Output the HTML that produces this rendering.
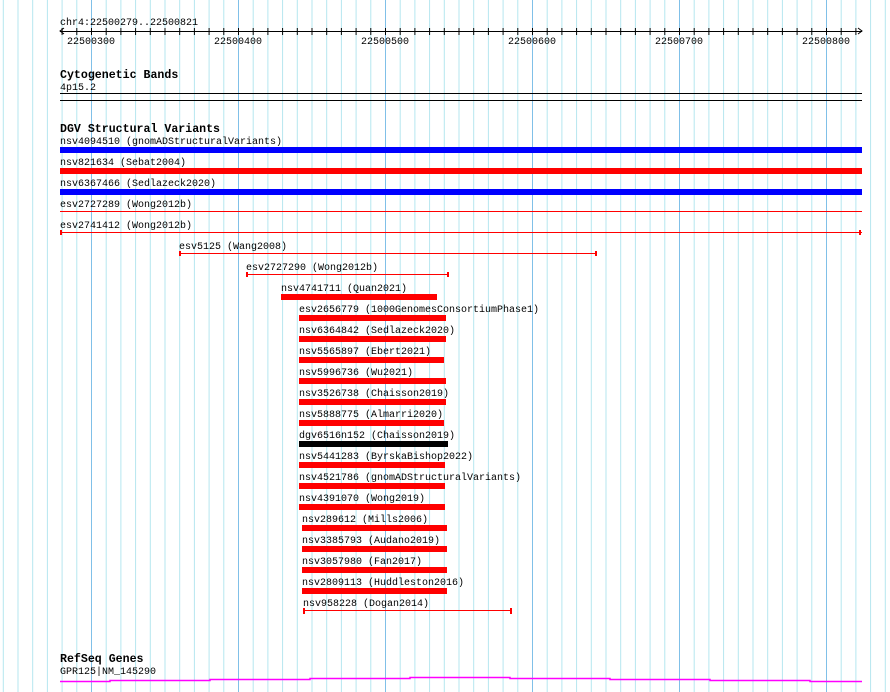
<!DOCTYPE html>
<html><head><meta charset="utf-8"><style>
html,body{margin:0;padding:0;background:#fff;}
svg{display:block}
text{font-family:"Liberation Mono","DejaVu Sans Mono",monospace;font-size:10px;fill:#000}
.h{font-weight:bold;font-size:11.6px}
rect{shape-rendering:crispEdges}
</style></head><body>
<svg width="890" height="692" viewBox="0 0 890 692" xmlns="http://www.w3.org/2000/svg">
<defs>
<pattern id="g1" patternUnits="userSpaceOnUse" x="2.8" y="0" width="14.7" height="692"><rect x="0" y="0" width="1" height="692" fill="#b4e6ef"/></pattern>
<pattern id="g2" patternUnits="userSpaceOnUse" x="91" y="0" width="147" height="692"><rect x="0" y="0" width="1" height="692" fill="#80c0e8"/></pattern>
<pattern id="t1" patternUnits="userSpaceOnUse" x="2.8" y="0" width="14.7" height="692"><rect x="0" y="28" width="1" height="7" fill="#000"/></pattern>
</defs>
<rect width="890" height="692" fill="#fff"/>
<rect x="0" width="890" height="692" fill="url(#g1)"/>
<rect x="0" width="890" height="692" fill="url(#g2)"/>
<text x="60" y="25">chr4:22500279..22500821</text>
<rect x="60" y="31" width="802" height="1" fill="#000"/>
<rect x="60" y="28" width="802" height="7" fill="url(#t1)"/>
<path d="M64 28 L60 31 L64 34" stroke="#000" fill="none"/>
<path d="M858 28 L862 31 L858 34" stroke="#000" fill="none"/>
<text x="91" y="44" text-anchor="middle">22500300</text>
<text x="238" y="44" text-anchor="middle">22500400</text>
<text x="385" y="44" text-anchor="middle">22500500</text>
<text x="532" y="44" text-anchor="middle">22500600</text>
<text x="679" y="44" text-anchor="middle">22500700</text>
<text x="826" y="44" text-anchor="middle">22500800</text>

<text class="h" x="60" y="78">Cytogenetic Bands</text>
<text x="60" y="90">4p15.2</text>
<rect x="60" y="93" width="802" height="1" fill="#000"/>
<rect x="60" y="100" width="802" height="1" fill="#000"/>

<text class="h" x="60" y="132">DGV Structural Variants</text>
<text x="60" y="144">nsv4094510 (gnomADStructuralVariants)</text>
<rect x="60" y="147" width="802" height="6" fill="#0000ff"/>
<text x="60" y="165">nsv821634 (Sebat2004)</text>
<rect x="60" y="168" width="802" height="6" fill="#ff0000"/>
<text x="60" y="186">nsv6367466 (Sedlazeck2020)</text>
<rect x="60" y="189" width="802" height="6" fill="#0000ff"/>
<text x="60" y="207">esv2727289 (Wong2012b)</text>
<rect x="60" y="211" width="802" height="1" fill="#ff0000"/>
<text x="60" y="228">esv2741412 (Wong2012b)</text>
<rect x="60" y="232" width="802" height="1" fill="#ff0000"/>
<rect x="60" y="230" width="2" height="5" fill="#ff0000"/><rect x="859" y="230" width="2" height="5" fill="#ff0000"/>
<text x="179" y="249">esv5125 (Wang2008)</text>
<rect x="180" y="253" width="416" height="1" fill="#ff0000"/>
<rect x="179" y="251" width="2" height="5" fill="#ff0000"/><rect x="595" y="251" width="2" height="5" fill="#ff0000"/>
<text x="246" y="270">esv2727290 (Wong2012b)</text>
<rect x="247" y="274" width="201" height="1" fill="#ff0000"/>
<rect x="246" y="272" width="2" height="5" fill="#ff0000"/><rect x="447" y="272" width="2" height="5" fill="#ff0000"/>
<text x="281" y="291">nsv4741711 (Quan2021)</text>
<rect x="281" y="294" width="156" height="6" fill="#ff0000"/>

<text x="299" y="312">esv2656779 (1000GenomesConsortiumPhase1)</text>
<rect x="299" y="315" width="147" height="6" fill="#ff0000"/>
<text x="299" y="333">nsv6364842 (Sedlazeck2020)</text>
<rect x="299" y="336" width="147" height="6" fill="#ff0000"/>
<text x="299" y="354">nsv5565897 (Ebert2021)</text>
<rect x="299" y="357" width="145" height="6" fill="#ff0000"/>
<text x="299" y="375">nsv5996736 (Wu2021)</text>
<rect x="299" y="378" width="147" height="6" fill="#ff0000"/>
<text x="299" y="396">nsv3526738 (Chaisson2019)</text>
<rect x="299" y="399" width="147" height="6" fill="#ff0000"/>
<text x="299" y="417">nsv5888775 (Almarri2020)</text>
<rect x="299" y="420" width="145" height="6" fill="#ff0000"/>
<text x="299" y="438">dgv6516n152 (Chaisson2019)</text>
<rect x="299" y="441" width="149" height="6" fill="#000"/>
<text x="299" y="459">nsv5441283 (ByrskaBishop2022)</text>
<rect x="299" y="462" width="146" height="6" fill="#ff0000"/>
<text x="299" y="480">nsv4521786 (gnomADStructuralVariants)</text>
<rect x="299" y="483" width="146" height="6" fill="#ff0000"/>
<text x="299" y="501">nsv4391070 (Wong2019)</text>
<rect x="299" y="504" width="146" height="6" fill="#ff0000"/>
<text x="302" y="522">nsv289612 (Mills2006)</text>
<rect x="302" y="525" width="145" height="6" fill="#ff0000"/>
<text x="302" y="543">nsv3385793 (Audano2019)</text>
<rect x="302" y="546" width="145" height="6" fill="#ff0000"/>
<text x="302" y="564">nsv3057980 (Fan2017)</text>
<rect x="302" y="567" width="145" height="6" fill="#ff0000"/>
<text x="302" y="585">nsv2809113 (Huddleston2016)</text>
<rect x="302" y="588" width="145" height="6" fill="#ff0000"/>
<text x="303" y="606">nsv958228 (Dogan2014)</text>
<rect x="304" y="610" width="207" height="1" fill="#ff0000"/>
<rect x="303" y="608" width="2" height="6" fill="#ff0000"/><rect x="510" y="608" width="2" height="6" fill="#ff0000"/>

<text class="h" x="60" y="662">RefSeq Genes</text>
<text x="60" y="674">GPR125|NM_145290</text>
<path d="M60 681.5 H110 V680.5 H210 V679.5 H310 V678.5 H410 V677.5 H510 V678.5 H610 V679.5 H710 V680.5 H810 V681.5 H862" stroke="#ff00ff" fill="none" stroke-width="1.5"/>
</svg>
</body></html>
